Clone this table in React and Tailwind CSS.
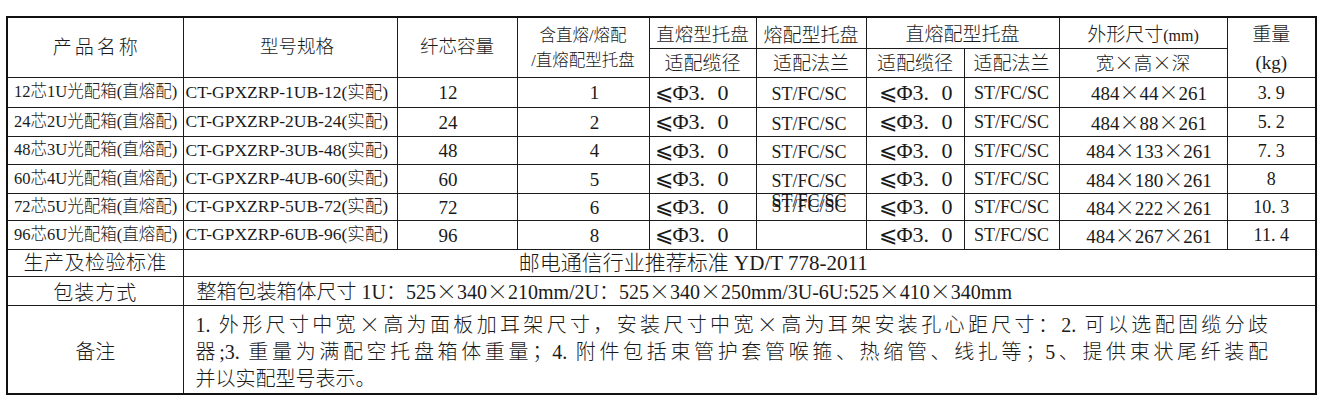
import React from "react";

const X = () => <span className="inline-block w-[1em] text-center font-['Noto_Sans_CJK_SC'] text-[1.05em] leading-none">×</span>;

const rows = [
  { name: "12芯1U光配箱(直熔配)", model: "CT-GPXZRP-1UB-12(实配)", cores: "12", trays: "1", f1: "single", dim: "44", w: "3. 9", h: "h-[30px]" },
  { name: "24芯2U光配箱(直熔配)", model: "CT-GPXZRP-2UB-24(实配)", cores: "24", trays: "2", f1: "single", dim: "88", w: "5. 2", h: "h-[29px]" },
  { name: "48芯3U光配箱(直熔配)", model: "CT-GPXZRP-3UB-48(实配)", cores: "48", trays: "4", f1: "single", dim: "133", w: "7. 3", h: "h-[28px]" },
  { name: "60芯4U光配箱(直熔配)", model: "CT-GPXZRP-4UB-60(实配)", cores: "60", trays: "5", f1: "single", dim: "180", w: "8", h: "h-[29px]" },
  { name: "72芯5U光配箱(直熔配)", model: "CT-GPXZRP-5UB-72(实配)", cores: "72", trays: "6", f1: "double", dim: "222", w: "10. 3", h: "h-[27px]" },
  { name: "96芯6U光配箱(直熔配)", model: "CT-GPXZRP-6UB-96(实配)", cores: "96", trays: "8", f1: "none", dim: "267", w: "11. 4", h: "h-[29px]" },
];

const cell = "border border-[#1c1c1c] p-0 align-middle whitespace-nowrap leading-none";

const Phi = () => (
  <span className="text-[22px]">
    <span className="font-['DejaVu_Sans']">⩽</span>
    <b>Φ</b>3.<span className="inline-block w-[0.56em]" />0
  </span>
);

export default function App() {
  return (
    <div className="min-h-[406px] w-[1319px] bg-white pt-[16px] pl-[6px] font-['Liberation_Serif','Noto_Sans_CJK_SC',serif] font-light text-[#1a1a1a]">
      <table className="table-fixed border-collapse w-[1309px] border-2 border-[#111]">
        <colgroup>
          <col className="w-[176px]" />
          <col className="w-[214px]" />
          <col className="w-[120px]" />
          <col className="w-[132px]" />
          <col className="w-[107px]" />
          <col className="w-[110px]" />
          <col className="w-[98px]" />
          <col className="w-[95px]" />
          <col className="w-[168px]" />
          <col className="w-[89px]" />
        </colgroup>
        <tbody>
          <tr>
            <td rowSpan={2} className={`${cell} h-[30px] text-center text-[19px] tracking-[3px] pl-[3px]`}>产品名称</td>
            <td rowSpan={2} className={`${cell} text-center text-[18.5px] pl-[14px]`}>型号规格</td>
            <td rowSpan={2} className={`${cell} text-center text-[18.5px]`}>纤芯容量</td>
            <td rowSpan={2} className={`${cell} text-center text-[16.5px] !leading-[25px]`}>
              含直熔/熔配
              <br />
              /直熔配型托盘
            </td>
            <td className={`${cell} text-center text-[18.5px] pt-[4px]`}>直熔型托盘</td>
            <td className={`${cell} text-center text-[19px] pt-[4px]`}>熔配型托盘</td>
            <td colSpan={2} className={`${cell} text-center text-[19px] pt-[2px]`}>直熔配型托盘</td>
            <td className={`${cell} text-center text-[19px] pt-[2px]`}>
              外形尺寸<span className="text-[16px]">(mm)</span>
            </td>
            <td rowSpan={2} className={`${cell} text-center text-[19px]`}>
              <div className="flex h-[30px] items-center justify-center pt-[2px]">重量</div>
              <div className="flex h-[29px] items-center justify-center">(kg)</div>
            </td>
          </tr>
          <tr>
            <td className={`${cell} h-[29px] text-center text-[19px]`}>适配缆径</td>
            <td className={`${cell} text-center text-[19px]`}>适配法兰</td>
            <td className={`${cell} text-center text-[19px]`}>适配缆径</td>
            <td className={`${cell} text-center text-[19px]`}>适配法兰</td>
            <td className={`${cell} text-center text-[18.5px]`}>
              宽<X />高<X />深
            </td>
          </tr>
          {rows.map((r) => (
            <tr key={r.name}>
              <td className={`${cell} ${r.h} text-left text-[16.5px] pl-[6px]`}>{r.name}</td>
              <td className={`${cell} text-left text-[17.5px] pl-[2px]`}>{r.model}</td>
              <td className={`${cell} text-left text-[19px] pl-[41px]`}>{r.cores}</td>
              <td className={`${cell} text-center text-[19px] pl-[23px]`}>{r.trays}</td>
              <td className={`${cell} text-left pl-[5px]`}>
                <Phi />
              </td>
              <td className={`${cell} text-left text-[18px] pl-[15px]`}>
                {r.f1 === "single" && <span className="inline-block pt-[3px]">ST/FC/SC</span>}
                {r.f1 === "double" && (
                  <div className="grid">
                    <span className="[grid-area:1/1] -translate-y-[6px]">ST/FC/SC</span>
                    <span className="[grid-area:1/1] -translate-y-[1px]">ST/FC/SC</span>
                  </div>
                )}
              </td>
              <td className={`${cell} text-left pl-[12px]`}>
                <Phi />
              </td>
              <td className={`${cell} text-center text-[18px]`}>ST/FC/SC</td>
              <td className={`${cell} text-center text-[19px] pl-[12px]`}>
                484<X />{r.dim}<X />261
              </td>
              <td className={`${cell} text-center text-[18px]`}>{r.w}</td>
            </tr>
          ))}
          <tr>
            <td className={`${cell} h-[27px] text-center text-[20px] tracking-[0.5px]`}>生产及检验标准</td>
            <td colSpan={9} className={`${cell} text-center text-[21px] pr-[112px]`}>
              邮电通信行业推荐标准 YD/T 778-2011
            </td>
          </tr>
          <tr>
            <td className={`${cell} h-[29px] text-center text-[20px] tracking-[1px] pt-[3px]`}>包装方式</td>
            <td colSpan={9} className={`${cell} text-left text-[20px] pl-[13px]`}>
              整箱包装箱体尺寸 1U：525<X />340<X />210mm/2U：525<X />340<X />250mm/3U-6U:525<X />410<X />340mm
            </td>
          </tr>
          <tr>
            <td className={`${cell} h-[88px] text-center text-[20px] pt-[5px]`}>备注</td>
            <td colSpan={9} className={`${cell} text-left text-[20px] !leading-[27px] pl-[12px] pr-[47px] pt-[6px]`}>
              <div className="text-justify [text-align-last:justify]">
                1. 外形尺寸中宽<X />高为面板加耳架尺寸，安装尺寸中宽<X />高为耳架安装孔心距尺寸：2. 可以选配固缆分歧
              </div>
              <div className="text-justify [text-align-last:justify]">
                器;3. 重量为满配空托盘箱体重量；4. 附件包括束管护套管喉箍、热缩管、线扎等；5、提供束状尾纤装配
              </div>
              <div>并以实配型号表示。</div>
            </td>
          </tr>
        </tbody>
      </table>
    </div>
  );
}
